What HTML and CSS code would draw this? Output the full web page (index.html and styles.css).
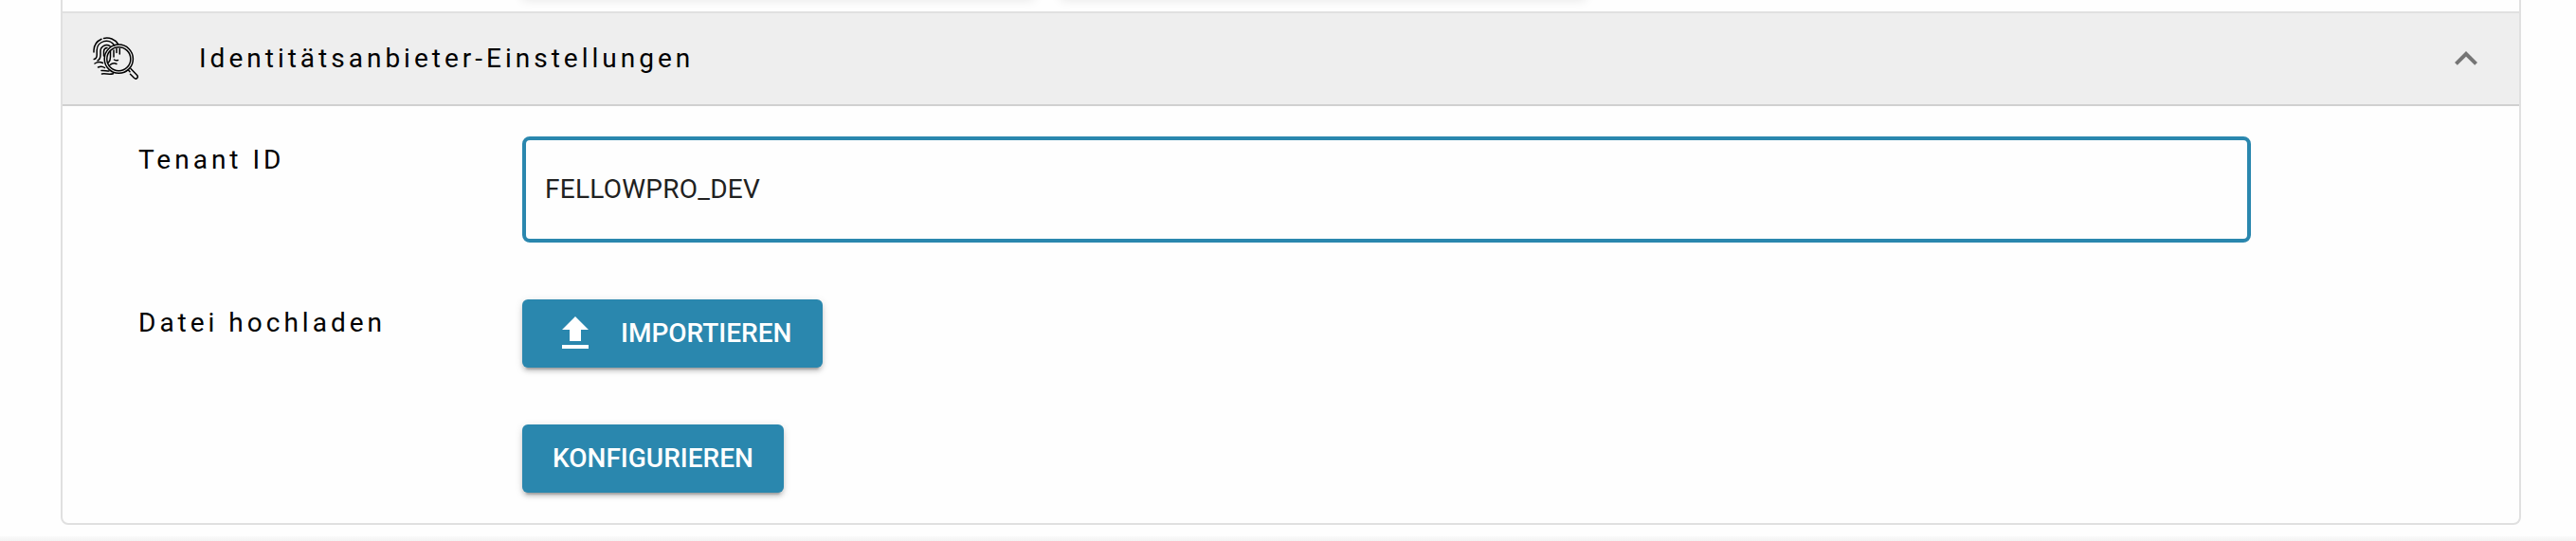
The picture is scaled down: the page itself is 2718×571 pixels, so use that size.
FILE: index.html
```html
<!DOCTYPE html>
<html lang="de">
<head>
<meta charset="utf-8">
<title>Identitätsanbieter-Einstellungen</title>
<link rel="stylesheet" href="styles.css">
</head>
<body>
<main class="page">
  <div class="previous"><div class="field-shadow"></div><div class="field-shadow wide"></div></div>
  <section class="panel">
    <header class="panel-header">
      <svg class="identity-icon" viewBox="0 0 48 46" fill="none" stroke="#000" stroke-width="1.500" stroke-linecap="round">
        <path d="M1 16v-2a13.500 13.500 0 0 1 8-11.700M11.500 1.400a14 14 0 0 1 15 6"/>
        <path d="M1.200 23.500c2.500-.5 3-2 3-4.500v-5a10 10 0 0 1 18.500-5"/>
        <path d="M5 25c2-1 3-3 3-6v-4a6.500 6.500 0 0 1 10-5.300"/>
        <path d="M11.500 20v-5a3.800 3.800 0 0 1 3.500-3.500M16.500 27c1.500-1.500 2-3.500 2-6v-6M22 14v7M25 12.500v4M28.300 12.500v5.500M22.500 24c1.500 1 3 .8 4 .5"/>
        <path d="M2 28c3-2 5.500-2 8.500-.5M5.500 32c3-1.500 5-1 7 .5M9 35.500c3-.5 5 .5 8 .5M9.500 39c4-.7 8 1 12-.3M18 29.500c2.500-2 5-2 7-1"/>
        <circle cx="27.300" cy="23.200" r="15.100"/>
        <circle cx="27.300" cy="23.200" r="12.500"/>
        <path d="M37.500 35l1.500 1.700M40 33.500l6.500 6.800c2.200 2.400-.8 5-3 3l-4-4"/>
      </svg>
      <h2 class="panel-title">Identitätsanbieter-Einstellungen</h2>
      <svg class="chevron" viewBox="0 0 24 24" fill="#757575"><path d="M12 8l-6 6 1.410 1.410L12 10.830l4.590 4.580L18 14z"/></svg>
    </header>
    <div class="panel-body">
      <label class="label" for="tenant">Tenant ID</label>
      <input class="tenant-input" id="tenant" type="text" value="FELLOWPRO_DEV">
      <span class="label upload-label">Datei hochladen</span>
      <div class="actions">
        <button class="button import"><svg class="upload-icon" viewBox="0 0 24 24" fill="#fff"><path d="M5 20h14v-2H5v2zM5 10h4v6h6v-6h4l-7-7-7 7z"/></svg>IMPORTIEREN</button>
        <button class="button configure">KONFIGURIEREN</button>
      </div>
    </div>
  </section>
  <div class="page-end"></div>
</main>
</body>
</html>
```
FILE: styles.css
```css
* { box-sizing: border-box; }
body { margin: 0; background: #fefefe; font-family: Roboto, sans-serif; font-size: 28px; overflow: hidden; }
.page { height: 571px; display: flex; flex-direction: column; }
.previous {
  height: 12px; margin: 0 58px 0 64px; padding-left: 485px; overflow: hidden;
  display: flex; gap: 28px; align-items: flex-start;
  border: solid #e0e0e0; border-width: 0 2px;
}
.field-shadow { width: 540px; height: 10px; margin-top: -13px; box-shadow: 0 2px 12px rgba(0, 0, 0, .12); }
.wide { width: 554px; }
.panel {
  height: 542px; margin: 0 58px 0 64px;
  border: 2px solid #e0e0e0; border-radius: 0 0 8px 8px;
}
.panel-header {
  height: 98px; display: flex; align-items: center;
  padding: 0 32px; background: #eee; border-bottom: 2px solid #d0d0d0;
}
.identity-icon { width: 48px; height: 46px; margin-right: 64px; }
.panel-title { margin: 0; flex: 1; font-size: 28px; font-weight: 400; letter-spacing: 4px; line-height: 36px; color: #000; }
.chevron { width: 48px; height: 48px; }
.panel-body {
  display: grid; grid-template-columns: 405px 1824px; grid-template-rows: 112px auto;
  row-gap: 60px; padding: 32px 0 0 80px;
}
.label { line-height: 36px; letter-spacing: 4px; padding-top: 7px; color: #000; }
.tenant-input {
  width: 1824px; height: 112px; padding: 0 20px 2px; border: 4px solid #2a87ae; border-radius: 8px;
  background: transparent; color: #212121; font: 400 28px Roboto, sans-serif; letter-spacing: .26px; outline: none;
}
.actions { display: flex; flex-direction: column; align-items: flex-start; gap: 60px; }
.button {
  height: 72px; display: flex; align-items: center; border: 0; border-radius: 6px; padding: 0 32px 1px;
  background: #2a87ae; color: #fff; font: 500 28px/32px Roboto, sans-serif;
  box-shadow: 0 6px 2px -4px rgba(0, 0, 0, .2), 0 4px 4px rgba(0, 0, 0, .14), 0 2px 10px rgba(0, 0, 0, .12);
}
.import { width: 317px; }
.configure { width: 276px; }
.upload-icon { width: 48px; height: 48px; margin-right: 24px; }
.page-end { height: 5px; margin-top: 12px; background: linear-gradient(#fafafa, #f3f3f3); }
```
